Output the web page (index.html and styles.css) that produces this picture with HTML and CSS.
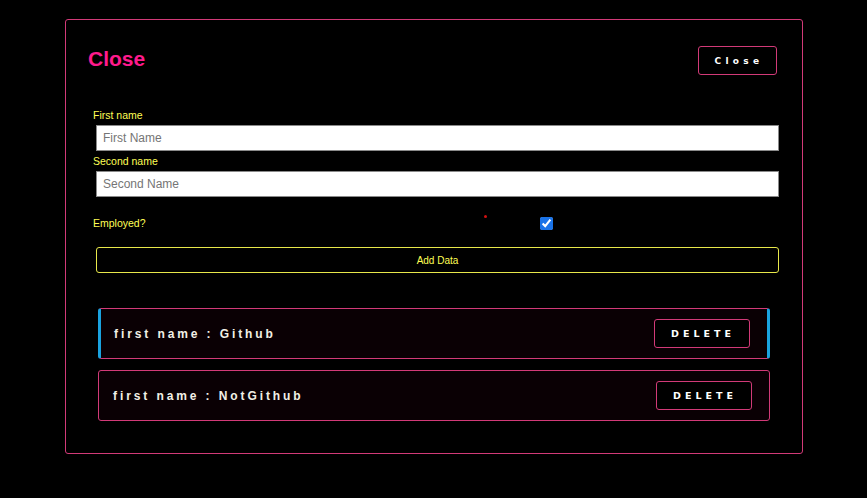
FILE: index.html
```html
<!DOCTYPE html>
<html>
<head>
<meta charset="utf-8">
<link rel="stylesheet" href="styles.css">
</head>
<body>
<div class="modal">
  <div class="header">
    <h2 class="title">Close</h2>
    <button class="close-btn">Close</button>
  </div>
  <form class="form">
    <label class="label">First name</label>
    <input class="input" type="text" placeholder="First Name">
    <label class="label">Second name</label>
    <input class="input" type="text" placeholder="Second Name">
    <div class="employed">
      <label class="label">Employed?</label>
      <span class="dot"></span>
      <input class="check" type="checkbox" checked>
    </div>
    <button type="button" class="add-btn">Add Data</button>
  </form>
  <div class="list">
    <div class="card active">
      <span class="card-text">first name : Github</span>
      <button class="del-btn">DELETE</button>
    </div>
    <div class="card">
      <span class="card-text">first name : NotGithub</span>
      <button class="del-btn">DELETE</button>
    </div>
  </div>
</div>
</body>
</html>
```
FILE: styles.css
```css
html, body {
  margin: 0;
  padding: 0;
  background: #000;
  font-family: "Liberation Sans", Arial, sans-serif;
}
.modal {
  box-sizing: border-box;
  width: 738px;
  height: 435px;
  margin: 19px 0 0 65px;
  border: 1px solid #d23a78;
  border-radius: 3px;
  padding: 0 22px 0 22px;
}
.header {
  display: flex;
  justify-content: space-between;
  align-items: center;
  padding-top: 25px;
}
.title {
  margin: 0 0 3px 0;
  color: #ff1a8c;
  font-size: 21px;
  font-weight: bold;
  line-height: 28px;
}
.close-btn {
  width: 79px;
  height: 29px;
  margin-right: 3px;
  background: #000;
  border: 1px solid #d23a78;
  border-radius: 3px;
  color: #fff;
  font-family: "DejaVu Sans", sans-serif;
  font-weight: bold;
  font-size: 9px;
  letter-spacing: 4.3px;
  padding: 0 0 0 3px;
}
.form {
  display: flex;
  flex-direction: column;
  padding: 33px 0 0 5px;
}
.label {
  color: #ffff55;
  font-size: 10.5px;
  line-height: 13px;
}
.input {
  box-sizing: border-box;
  width: 683px;
  height: 26px;
  margin: 3px 0 4px 3px;
  border: 1px solid #8a8a8a;
  background: #fff;
  padding: 0 6px;
  font-family: "Liberation Sans", Arial, sans-serif;
  font-size: 12px;
  outline: none;
}
.input::placeholder {
  color: #757575;
}
.employed {
  display: flex;
  align-items: center;
  height: 14px;
  margin-top: 15px;
  position: relative;
}
.dot {
  position: absolute;
  left: 391px;
  top: -1px;
  width: 3px;
  height: 3px;
  border-radius: 50%;
  background: #d01010;
}
.check {
  margin: 0 0 0 394px;
  width: 13px;
  height: 13px;
  accent-color: #1a73e8;
}
.add-btn {
  box-sizing: border-box;
  width: 683px;
  height: 26px;
  margin: 17px 0 0 3px;
  background: #000;
  border: 1px solid #e8e84a;
  border-radius: 3px;
  color: #ffff55;
  font-family: "Liberation Sans", Arial, sans-serif;
  font-size: 10px;
}
.list {
  display: flex;
  flex-direction: column;
  gap: 11px;
  padding: 35px 0 0 10px;
}
.card {
  box-sizing: border-box;
  width: 672px;
  height: 51px;
  display: flex;
  align-items: center;
  justify-content: space-between;
  background: #0a0004;
  border: 1px solid #d23a78;
  border-radius: 3px;
  padding: 0 17px 0 14px;
}
.card.active {
  border-left: 3px solid #1aa3e0;
  border-right: 3px solid #1aa3e0;
  padding-left: 13px;
  padding-right: 17px;
}
.card-text {
  color: #f2f0e6;
  font-size: 12px;
  font-weight: bold;
  letter-spacing: 2.9px;
}
.del-btn {
  box-sizing: border-box;
  width: 96px;
  height: 29px;
  background: #000;
  border: 1px solid #d23a78;
  border-radius: 3px;
  color: #fff;
  font-family: "DejaVu Sans", sans-serif;
  font-weight: bold;
  font-size: 9.5px;
  letter-spacing: 4px;
  padding: 0 0 0 2px;
}
```
